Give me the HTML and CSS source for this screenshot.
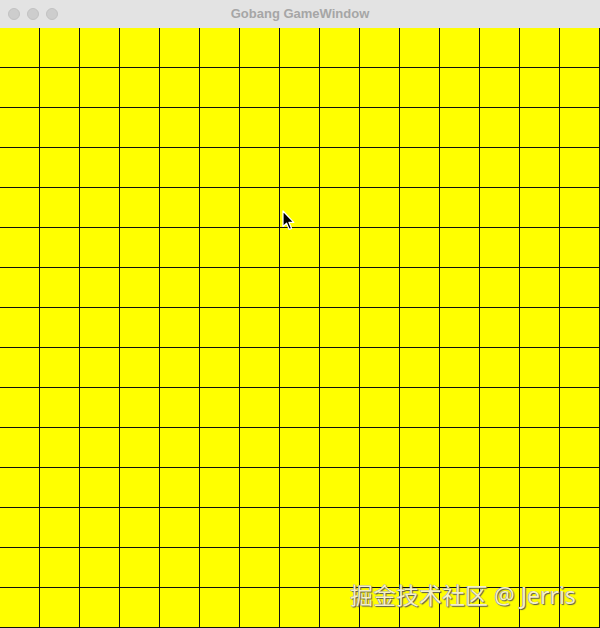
FILE: index.html
```html
<!DOCTYPE html>
<html>
<head>
<meta charset="utf-8">
<link rel="stylesheet" href="styles.css">
</head>
<body>
<div class="window">
  <div class="titlebar">
    <div class="lights">
      <span class="light"></span>
      <span class="light"></span>
      <span class="light"></span>
    </div>
    <div class="title">Gobang GameWindow</div>
  </div>
  <div class="board">
    <svg class="cursor" width="14" height="22" viewBox="0 0 14 22">
      <path d="M1 1 L1 16.5 L4.6 13.2 L7.2 19.4 L9.6 18.4 L7 12.4 L11.8 12.4 Z" fill="#000" stroke="#fff" stroke-width="1.2" stroke-linejoin="round"/>
    </svg>
    <div class="watermark">掘金技术社区 @ Jerris</div>
  </div>
</div>
</body>
</html>
```
FILE: styles.css
```css
html, body {
  margin: 0;
  padding: 0;
  width: 600px;
  height: 628px;
  overflow: hidden;
  background: #ffff00;
}
.window {
  width: 600px;
  height: 628px;
  display: flex;
  flex-direction: column;
}
.titlebar {
  height: 28px;
  flex: none;
  background: #e3e3e3;
  position: relative;
  display: flex;
  align-items: center;
  justify-content: center;
}
.lights {
  position: absolute;
  left: 8px;
  top: 8px;
  display: flex;
  gap: 7px;
}
.light {
  width: 12px;
  height: 12px;
  border-radius: 50%;
  background: #cdcdcd;
  box-sizing: border-box;
  border: 1px solid #c2c2c2;
}
.title {
  font-family: "Liberation Sans", Arial, sans-serif;
  font-weight: bold;
  font-size: 13px;
  color: #a6a6a6;
  margin-top: -2px;
}
.board {
  flex: 1;
  position: relative;
  background-color: #ffff00;
  background-image:
    linear-gradient(to right, transparent 39px, #111 39px, #111 40px, transparent 40px),
    linear-gradient(to bottom, transparent 39px, #111 39px, #111 40px, transparent 40px);
  background-size: 40px 40px;
  background-position: 0 0;
}
.cursor {
  position: absolute;
  left: 282px;
  top: 182px;
}
.watermark {
  position: absolute;
  left: 350px;
  top: 552px;
  font-family: "Noto Sans", "Noto Sans CJK SC", sans-serif;
  font-size: 23px;
  line-height: 30px;
  color: #f4f0c8;
  text-shadow: 1px 1px 1px #555, -0.5px -0.5px 0 #777;
  white-space: nowrap;
}
```
